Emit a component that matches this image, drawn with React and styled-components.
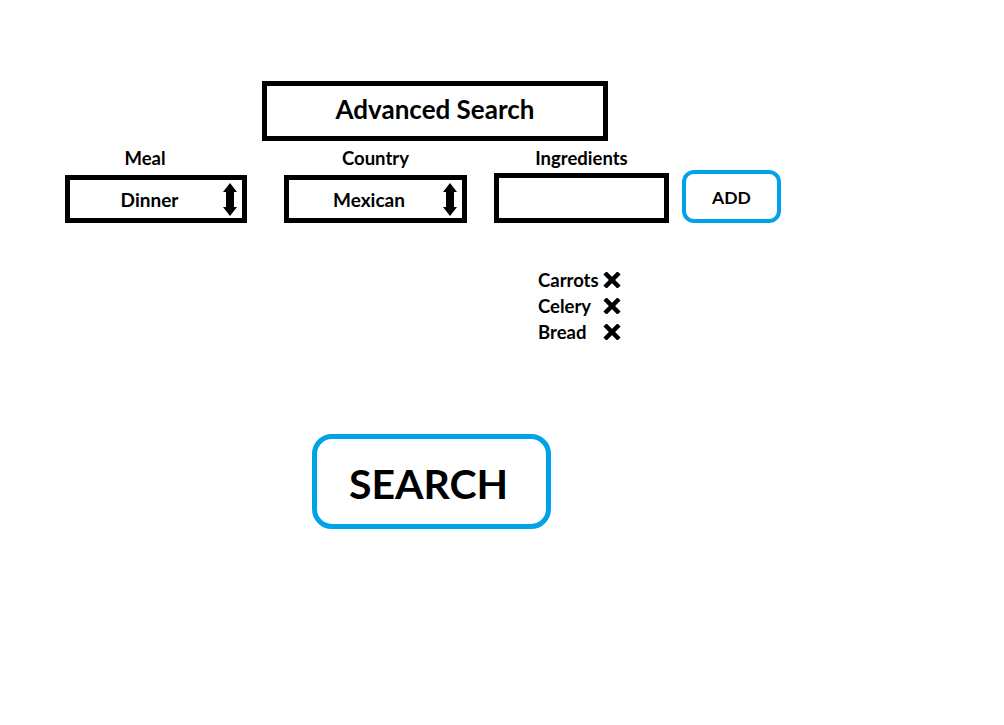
import React from "react";
import styled, { createGlobalStyle } from "styled-components";

const Global = createGlobalStyle`
  html, body { margin: 0; padding: 0; background: #fff; }
  body { font-family: Lato, "Open Sans", sans-serif; color: #000; }
  * { box-sizing: border-box; }
`;

const Page = styled.div`
  width: 1004px;
  min-height: 725px;
  padding-top: 81px;
  display: flex;
  flex-direction: column;
  align-items: flex-start;
`;

const TitleBox = styled.div`
  margin-left: 262px;
  width: 346px;
  height: 60px;
  border: 5px solid #000;
  display: flex;
  align-items: center;
  justify-content: center;
  padding-bottom: 4px;
  font-size: 26px;
  font-weight: 700;
`;

const FieldsRow = styled.div`
  margin-top: 7px;
  padding-left: 65px;
  display: flex;
  align-items: flex-start;
`;

const Field = styled.div`
  display: flex;
  flex-direction: column;
  margin-left: ${(p) => p.$ml || 0}px;
  width: ${(p) => p.$w}px;
  padding-top: ${(p) => p.$pt || 0}px;
`;

const Label = styled.div`
  height: 20px;
  line-height: 20px;
  font-size: 18.5px;
  font-weight: 700;
  text-align: center;
  padding-right: ${(p) => p.$pr || 0}px;
`;

const SelectBox = styled.div`
  margin-top: 7px;
  height: 48px;
  border: 5px solid #000;
  display: flex;
  align-items: center;
  padding-right: 5px;
`;

const SelectText = styled.div`
  flex: 1;
  text-align: center;
  font-size: 19px;
  font-weight: 700;
  padding-left: 6px;
  padding-top: 1px;
`;

const TextBox = styled.div`
  margin-top: 5px;
  height: 50px;
  border: 5px solid #000;
`;

const AddButton = styled.div`
  height: 53px;
  border: 4px solid #00a2e8;
  border-radius: 12px;
  display: flex;
  align-items: center;
  justify-content: center;
  padding-top: 2px;
  font-size: 17.5px;
  font-weight: 700;
`;

const List = styled.div`
  margin-top: 44px;
  margin-left: 538px;
  display: grid;
  grid-template-columns: 65px 18px;
  grid-auto-rows: 26px;
  align-items: center;
  font-size: 18.5px;
  font-weight: 700;
`;

const SearchButton = styled.div`
  margin-top: 89px;
  margin-left: 312px;
  width: 239px;
  height: 95px;
  border: 5px solid #00a2e8;
  border-radius: 20px;
  display: flex;
  align-items: center;
  justify-content: center;
  padding-right: 6px;
  padding-top: 4px;
  font-size: 41px;
  font-weight: 700;
`;

const UpDown = () => (
  <svg width="14" height="33" viewBox="0 0 14 33">
    <polygon points="7,0 14,9 11,9 11,24 14,24 7,33 0,24 3,24 3,9 0,9" fill="#000" />
  </svg>
);

const Cross = () => (
  <svg width="18" height="16" viewBox="0 0 18 16" style={{ display: "block" }}>
    <path d="M2 1 L16 15 M16 1 L2 15" stroke="#000" strokeWidth="4.5" />
  </svg>
);

const ingredients = ["Carrots", "Celery", "Bread"];

export default function App() {
  return (
    <>
      <Global />
      <Page>
        <TitleBox>Advanced Search</TitleBox>
        <FieldsRow>
          <Field $w={182}>
            <Label $pr={22}>Meal</Label>
            <SelectBox>
              <SelectText>Dinner</SelectText>
              <UpDown />
            </SelectBox>
          </Field>
          <Field $w={183} $ml={37}>
            <Label>Country</Label>
            <SelectBox>
              <SelectText>Mexican</SelectText>
              <UpDown />
            </SelectBox>
          </Field>
          <Field $w={175} $ml={27}>
            <Label>Ingredients</Label>
            <TextBox />
          </Field>
          <Field $w={99} $ml={13} $pt={22}>
            <AddButton>ADD</AddButton>
          </Field>
        </FieldsRow>
        <List>
          {ingredients.map((i) => (
            <React.Fragment key={i}>
              <span>{i}</span>
              <Cross />
            </React.Fragment>
          ))}
        </List>
        <SearchButton>SEARCH</SearchButton>
      </Page>
    </>
  );
}
